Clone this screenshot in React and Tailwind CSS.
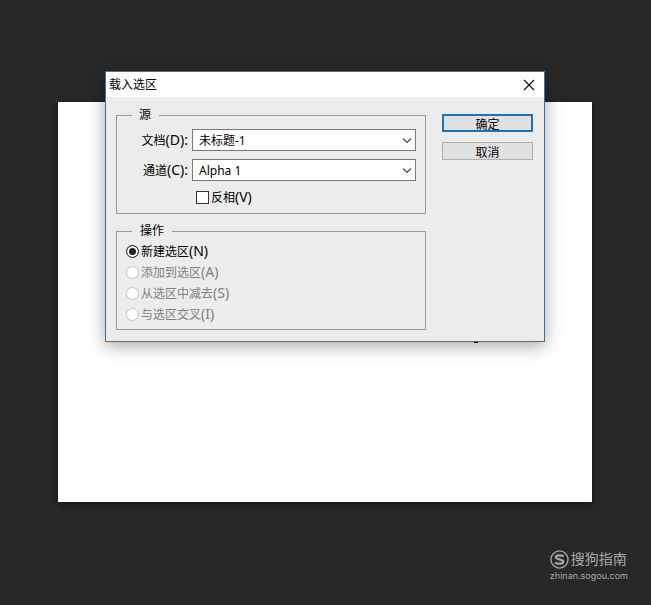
import React from 'react';

const operations = [
    { id: 'new', label: '新建选区', hotkey: '(N)' },
    { id: 'add', label: '添加到选区', hotkey: '(A)', disabled: true },
    { id: 'subtract', label: '从选区中减去', hotkey: '(S)', disabled: true },
    { id: 'intersect', label: '与选区交叉', hotkey: '(I)', disabled: true },
];

function Hotkey({ children }) {
    return <span className="text-sm leading-4">{children}</span>;
}

function SelectField({ id, label, hotkey, value }) {
    return (
        <div className="flex items-center">
            <label htmlFor={id} className="w-[66px] pr-1 text-right whitespace-nowrap">
                {label}<Hotkey>{hotkey}:</Hotkey>
            </label>
            <div className="relative flex-1">
                <select
                    id={id}
                    defaultValue={value}
                    className="block h-[22px] w-full appearance-none rounded-none border border-[#7a7a7a] bg-white pt-0.5 pr-5 pl-1.5 text-xs leading-[18px] text-black"
                >
                    <option>{value}</option>
                </select>
                <svg className="pointer-events-none absolute top-2 right-1 h-2 w-2.5" viewBox="0 0 10 8" fill="none" stroke="#444" strokeWidth="1.1">
                    <path d="M1 1.5 5 5.5 9 1.5" />
                </svg>
            </div>
        </div>
    );
}

function LoadSelectionDialog() {
    return (
        <section
            role="dialog"
            aria-labelledby="dialog-title"
            className="w-[440px] border border-[#2b76b5] bg-[#ececec] text-xs text-black shadow-[0_4px_16px_rgba(0,0,0,0.35)]"
        >
            <header className="flex h-[25px] items-center justify-between bg-white pr-[9px] pl-[3px]">
                <h1 id="dialog-title">载入选区</h1>
                <button type="button" aria-label="关闭" className="flex h-5 w-3 items-center justify-center">
                    <svg className="h-3 w-3" viewBox="0 0 12 12" fill="none" stroke="#111" strokeWidth="1.2">
                        <path d="M1 1 11 11M11 1 1 11" />
                    </svg>
                </button>
            </header>

            <form className="flex items-start gap-4 pt-[9px] pr-[11px] pb-[11px] pl-2.5" onSubmit={(e) => e.preventDefault()}>
                <div className="flex-1">
                    <fieldset className="border border-[#999] px-[9px] pb-2">
                        <legend className="ml-1.5 pr-2 pl-[7px] leading-[18px]">源</legend>
                        <div className="mt-[5px] flex flex-col gap-2">
                            <SelectField id="document" label="文档" hotkey="(D)" value="未标题-1" />
                            <SelectField id="channel" label="通道" hotkey="(C)" value="Alpha 1" />
                            <label className="ml-[66px] flex h-4 items-center gap-0.5 pl-1">
                                <input type="checkbox" className="h-[13px] w-[13px] appearance-none border border-[#333] bg-white checked:bg-[#333]" />
                                <span>反相<Hotkey>(V)</Hotkey></span>
                            </label>
                        </div>
                    </fieldset>

                    <fieldset className="mt-2 border border-[#999] px-[9px] pb-1">
                        <legend className="ml-1.5 px-2 leading-[18px]">操作</legend>
                        <div className="pt-px">
                            {operations.map((op) => (
                                <label key={op.id} className={`flex h-[21px] items-center gap-0.5 ${op.disabled ? 'text-[#808080]' : ''}`}>
                                    <input
                                        type="radio"
                                        name="operation"
                                        value={op.id}
                                        defaultChecked={op.id === 'new'}
                                        disabled={op.disabled}
                                        className="h-[13px] w-[13px] appearance-none rounded-full border border-[#333] bg-white checked:bg-[#222] checked:shadow-[inset_0_0_0_2px_white] disabled:border-[#c4c4c4]"
                                    />
                                    <span>{op.label}<Hotkey>{op.hotkey}</Hotkey></span>
                                </label>
                            ))}
                        </div>
                    </fieldset>
                </div>

                <div className="mt-2 flex w-[91px] flex-col gap-2.5">
                    <button type="submit" className="h-[18px] border-2 border-[#1a73b5] bg-[#e1e1e1] pt-0.5 leading-[14px]">确定</button>
                    <button type="button" className="h-[18px] border border-[#adadad] bg-[#e1e1e1] pt-0.5 leading-[16px]">取消</button>
                </div>
            </form>
        </section>
    );
}

function Watermark() {
    return (
        <footer className="mt-auto mr-[23px] mb-[23px] self-end text-[#a9a9a9]">
            <div className="flex items-center gap-0.5">
                <svg className="h-[19px] w-[19px]" viewBox="0 0 20 20" fill="none" stroke="currentColor">
                    <circle cx="10" cy="10" r="9" strokeWidth="1.4" />
                    <path d="M14.5 6.7C12.5 5.4 6.2 5 6.2 7.7c0 2.6 7.8 1.8 7.8 4.6 0 2.7-6.3 2.6-8.7 1" strokeWidth="2.3" />
                </svg>
                <span className="text-sm leading-5">搜狗指南</span>
            </div>
            <div className="pt-px text-[9px] leading-3 font-['Inter',sans-serif]">zhinan.sogou.com</div>
        </footer>
    );
}

export default function App() {
    return (
        <main className="relative flex min-h-screen flex-col bg-[#282828] font-['Noto_Sans','Noto_Sans_CJK_SC',sans-serif]">
            <div className="mt-[102px] mr-[59px] ml-[58px] h-[400px] bg-white shadow-[0_2px_6px_rgba(0,0,0,0.5)]">
                {/* brush mark left on the canvas, mostly under the dialog */}
                <div className="ml-[416px] pt-[238px]">
                    <div className="h-[3px] w-1 bg-black" />
                </div>
            </div>
            <div className="absolute inset-x-0 top-[71px] flex justify-center pr-px">
                <LoadSelectionDialog />
            </div>
            <Watermark />
        </main>
    );
}
